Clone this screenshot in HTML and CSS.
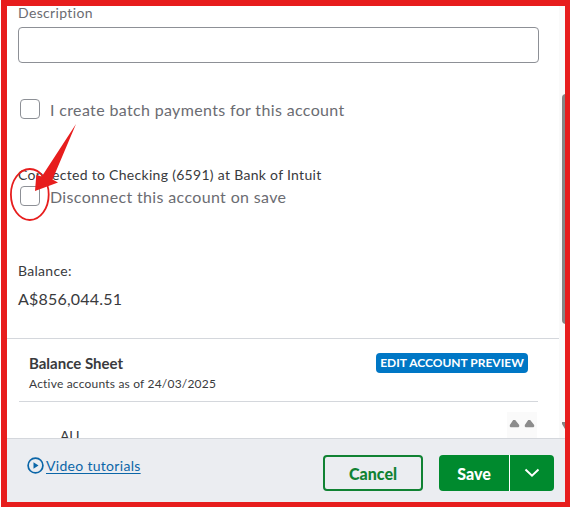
FILE: index.html
```html
<!DOCTYPE html>
<html lang="en">
<head>
<meta charset="utf-8">
<title>Account</title>
<link rel="stylesheet" href="styles.css">
</head>
<body>
<div class="page">
  <main class="content">
    <form class="form">
      <label class="field-label" for="description"><span>Description</span></label>
      <input class="field" id="description" type="text">
      <label class="check batch"><span class="box"></span><span class="batch-text">I create batch payments for this account</span></label>
      <p class="connected"><span>Connected to Checking (6591) at Bank of Intuit</span></p>
      <label class="check"><span class="box"></span><span class="disconnect-text">Disconnect this account on save</span></label>
      <p class="balance-label"><span>Balance:</span></p>
      <p class="balance"><span>A$856,044.51</span></p>
    </form>
    <section class="preview">
      <header class="preview-head">
        <div>
          <h2 class="title"><span>Balance Sheet</span></h2>
          <p class="subtitle"><span>Active accounts as of 24/03/2025</span></p>
        </div>
        <button class="edit"><span>EDIT ACCOUNT PREVIEW</span></button>
      </header>
      <div class="preview-row">
        <span class="currency">AU</span>
        <svg class="sort" width="30" height="26" viewBox="0 0 30 26" fill="#8c8c8c"><path d="M6.200 8h2l4 5v1.500l-.8.700H3.600l-.8-.700V13zM21.200 8h2l4 5v1.500l-.8.700h-7.800l-.8-.700V13z"/></svg>
      </div>
    </section>
    <div class="scrollbar"><div class="thumb"></div><svg class="down" width="6" height="8" viewBox="0 0 6 8"><path d="M3 0h3v7L3 2z" fill="#858585"/></svg></div>
  </main>
  <footer class="footer">
    <a class="video" href="#"><svg width="17" height="17" viewBox="0 0 17 17"><circle cx="8.500" cy="8.500" r="7.400" fill="none" stroke="#0b66a8" stroke-width="1.700"/><path d="M6.500 5.300v6.400l5-3.200z" fill="#0b66a8"/></svg><span>Video tutorials</span></a>
    <button class="cancel"><span>Cancel</span></button>
    <div class="save-group">
      <button class="save"><span>Save</span></button>
      <button class="more" aria-label="More"><svg width="16" height="10" viewBox="0 0 16 10"><path d="M1.500 1.500 8 7.700l6.500-6.200" fill="none" stroke="#fff" stroke-width="2"/></svg></button>
    </div>
  </footer>
  <div class="frame"></div>
  <svg class="annotation" width="80" height="110" viewBox="0 0 80 110"><ellipse cx="24.800" cy="79.500" rx="18.900" ry="25.500" fill="none" stroke="#e71d1d" stroke-width="1.800"/><path d="M71.300 9 53 62.500 61 67.200 30 76 31.500 59.500 36.500 62z" fill="#e71d1d" class="hidden"/><path d="M71 9 47.500 64.500 53 67.500 30 76 31.300 60 36.800 61.500z" fill="#e71d1d"/></svg>
</div>
</body>
</html>
```
FILE: styles.css
```css
* { box-sizing: border-box; }
body { margin: 0; background: #fff; color: #393a3d; font-family: Lato, "Liberation Sans", sans-serif; }
p, h2 { margin: 0; font-weight: 400; }
button { margin: 0; padding: 0; font-family: inherit; border: 0; }
.page { position: relative; width: 570px; height: 507px; overflow: hidden; }
.content { position: relative; height: 438px; overflow: hidden; }
.form { height: 338px; padding: 3px 31px 0 18px; }
.field-label { display: block; height: 20px; margin-bottom: 4px; font-size: 14px; line-height: 20px; color: #6b6c72; letter-spacing: .35px; }
.field { display: block; width: 521px; height: 36px; border: 1px solid #8d9096; border-radius: 4px; background: #fff; }
.check { display: flex; align-items: center; gap: 10px; height: 22px; padding-left: 2px; font-size: 16px; color: #6b6c72; }
.batch { margin: 35px 0 45px; }
.box { width: 20px; height: 20px; border: 1px solid #8d9096; border-radius: 4px; background: #fff; }
.batch-text { letter-spacing: .35px; }
.disconnect-text { letter-spacing: .35px; }
.connected { height: 20px; line-height: 20px; font-size: 14px; letter-spacing: .3px; }
.balance-label { height: 20px; margin-top: 54px; line-height: 20px; font-size: 14px; letter-spacing: .3px; }
.connected + .check { height: 22px; }
.balance { height: 24px; margin-top: 6px; line-height: 24px; font-size: 16px; letter-spacing: .2px; }
.preview { width: 559px; border-top: 1px solid #d4d7dc; padding: 0 21px 0 19px; }
.preview-head { display: flex; justify-content: space-between; align-items: flex-start; height: 63px; padding: 14px 10px 0; border-bottom: 1px solid #d4d7dc; }
.title { height: 20px; line-height: 20px; font-size: 15px; font-weight: 700; }
.subtitle { height: 20px; line-height: 20px; font-size: 12px; margin-top: 1px; letter-spacing: .2px; }
.edit { width: 152px; height: 20px; border-radius: 4px; background: #0077c5; color: #fff; font-size: 12px; font-weight: 700; line-height: 20px; white-space: nowrap; }
.preview-row { display: flex; justify-content: space-between; padding: 10px 1px 0 41px; }
.currency { margin-top: 14px; line-height: 20px; font-size: 14px; }
.sort { background: #fafafa; }
.scrollbar { position: absolute; top: 0; right: 0; width: 11px; height: 438px; background: #fafafa; }
.thumb { width: 8px; height: 230px; margin: 94px 0 0 3px; border-radius: 4px; background: #858585; }
.down { display: block; margin: 98px 0 0; }
.footer { display: flex; align-items: flex-start; height: 69px; padding: 16px 16px 0 27px; border-top: 1px solid #d4d7dc; background: #ebedf1; }
.video { display: flex; align-items: center; gap: 2px; width: 296px; height: 20px; color: #0b66a8; font-size: 14px; letter-spacing: .3px; text-decoration: none; }
.video span { text-decoration: underline; text-underline-offset: 2px; }
.cancel { width: 100px; height: 36px; border: 2px solid #108233; border-radius: 4px; background: #fff0; color: #108233; font-size: 16px; font-weight: 900; }
.save-group { display: flex; width: 115px; height: 36px; margin-left: 16px; border-radius: 4px; overflow: hidden; background: #008a2e; }
.save { width: 71px; border-right: 1px solid #fff; background: none; color: #fff; font-size: 16px; font-weight: 900; }
.more { display: grid; place-items: center; flex: 1; background: none; }
.frame { position: absolute; inset: 0 0 0 1px; border: solid #e71d1d; border-width: 6px 5px 5px 6px; box-shadow: -1px 0 #fff; pointer-events: none; }
.annotation { position: absolute; left: 5px; top: 115px; }
.hidden { display: none; }
```
